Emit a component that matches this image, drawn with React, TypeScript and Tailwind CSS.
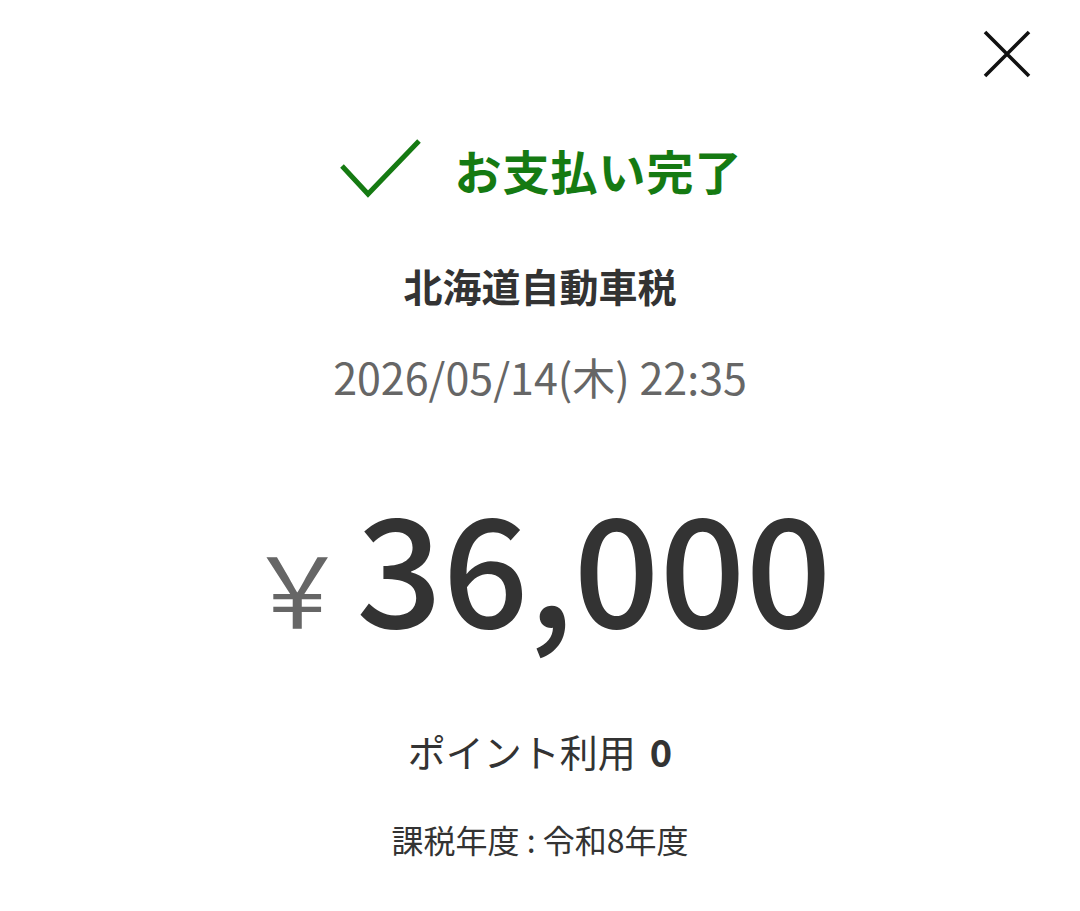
const FONT = '"Noto Sans CJK JP", "Noto Sans", sans-serif'

export default function App() {
  return (
    <div className="w-[1080px] h-[911px] bg-white text-[#333]" style={{ fontFamily: FONT }}>
      {/* Header */}
      <div className="flex h-[100px] justify-end pr-[42px] pt-[23px]">
        <button aria-label="閉じる" className="flex h-[62px] w-[62px] items-center justify-center">
          <svg width="48" height="48" viewBox="0 0 48 48" fill="none" stroke="#111" strokeWidth="3.6">
            <path d="M2 2 L46 46 M46 2 L2 46" />
          </svg>
        </button>
      </div>

      {/* Status */}
      <div className="flex h-[138px] items-center justify-center gap-[33px] pl-[2px]">
        <svg width="82" height="60" viewBox="0 0 82 60" fill="none" stroke="#157a12" strokeWidth="5">
          <path d="M2 27 L28 55 L79 2" />
        </svg>
        <span className="text-[47px] font-bold leading-none tracking-[1px] text-[#157a12]">お支払い完了</span>
      </div>

      {/* Detail */}
      <div className="flex flex-col items-center">
        <div className="flex h-[94px] items-center text-[39px] font-bold">北海道自動車税</div>
        <div className="flex h-[88px] items-center text-[43px] text-[#666]">2026/05/14(木) 22:35</div>
        <div className="flex h-[284px] items-center">
          <div className="flex items-baseline">
            <span className="mr-[10px] text-[98px] leading-none text-[#666]">￥</span>
            <span className="text-[151px] font-medium leading-none">36,000</span>
          </div>
        </div>
        <div className="flex h-[92px] items-center text-[38px]">
          ポイント利用<span className="ml-[14px] font-bold">0</span>
        </div>
        <div className="flex h-[86px] items-center text-[32px]">課税年度 : 令和8年度</div>
      </div>
    </div>
  )
}
